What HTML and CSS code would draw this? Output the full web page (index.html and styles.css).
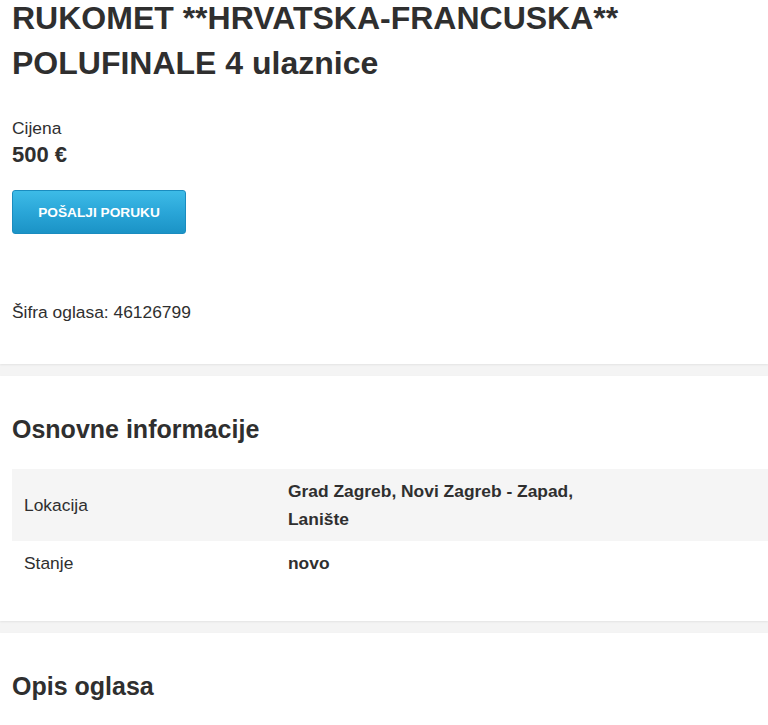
FILE: index.html
```html
<!DOCTYPE html>
<html lang="hr">
<head>
<meta charset="utf-8">
<title>RUKOMET **HRVATSKA-FRANCUSKA** POLUFINALE 4 ulaznice</title>
<link rel="stylesheet" href="styles.css">
</head>
<body>
<section class="card card-main">
  <h1 class="ad-title">RUKOMET **HRVATSKA-FRANCUSKA** POLUFINALE 4 ulaznice</h1>
  <div class="price-label">Cijena</div>
  <div class="price-value">500 €</div>
  <button class="btn-message" type="button">POŠALJI PORUKU</button>
  <div class="ad-code">Šifra oglasa: 46126799</div>
</section>
<section class="card card-info">
  <h2 class="card-heading">Osnovne informacije</h2>
  <div class="info-table">
    <div class="info-row info-row-shaded">
      <div class="info-label">Lokacija</div>
      <div class="info-value">Grad Zagreb, Novi Zagreb - Zapad, Lanište</div>
      <div class="info-fill"></div>
    </div>
    <div class="info-row">
      <div class="info-label">Stanje</div>
      <div class="info-value">novo</div>
      <div class="info-fill"></div>
    </div>
  </div>
</section>
<section class="card card-desc">
  <h2 class="card-heading">Opis oglasa</h2>
</section>
</body>
</html>
```
FILE: styles.css
```css
html, body {
  margin: 0;
  padding: 0;
}
body {
  background: #f4f4f4;
  font-family: "Liberation Sans", Arial, sans-serif;
  color: #2f2f2f;
  overflow: hidden;
}
.card {
  background: #ffffff;
  box-shadow: 0 1px 2px rgba(0, 0, 0, 0.07);
  margin-bottom: 12px;
}
.card-main {
  padding: 1px 12px 42px;
}
.ad-title {
  margin: -5px 0 0;
  font-size: 32px;
  line-height: 45px;
  font-weight: bold;
}
.price-label {
  margin-top: 32px;
  font-size: 17.4px;
  line-height: 20px;
}
.price-value {
  margin-top: 4px;
  font-size: 22px;
  line-height: 26px;
  font-weight: bold;
}
.btn-message {
  display: block;
  margin-top: 22px;
  width: 174px;
  height: 44px;
  padding: 0;
  border: 1px solid #1a8cbf;
  border-radius: 3px;
  background: linear-gradient(to bottom, #3dbbe7 0%, #2aa6d8 50%, #1b93c6 100%);
  color: #ffffff;
  font-family: "Liberation Sans", Arial, sans-serif;
  font-size: 13.7px;
  font-weight: bold;
  cursor: pointer;
}
.ad-code {
  margin-top: 68px;
  font-size: 17.4px;
  line-height: 20px;
}
.card-info {
  padding: 38px 0 36px 12px;
}
.card-heading {
  margin: 0;
  font-size: 25px;
  line-height: 30px;
  font-weight: bold;
}
.info-table {
  margin-top: 25px;
}
.info-row {
  display: grid;
  grid-template-columns: 276px 300px 1fr;
  align-items: center;
  font-size: 17.4px;
  line-height: 28px;
}
.info-row-shaded {
  background: #f5f5f5;
}
.info-label {
  padding: 8px 12px;
}
.info-value {
  padding: 8px 0;
  font-weight: bold;
}
.card-desc {
  padding: 38px 12px 40px;
}
```
